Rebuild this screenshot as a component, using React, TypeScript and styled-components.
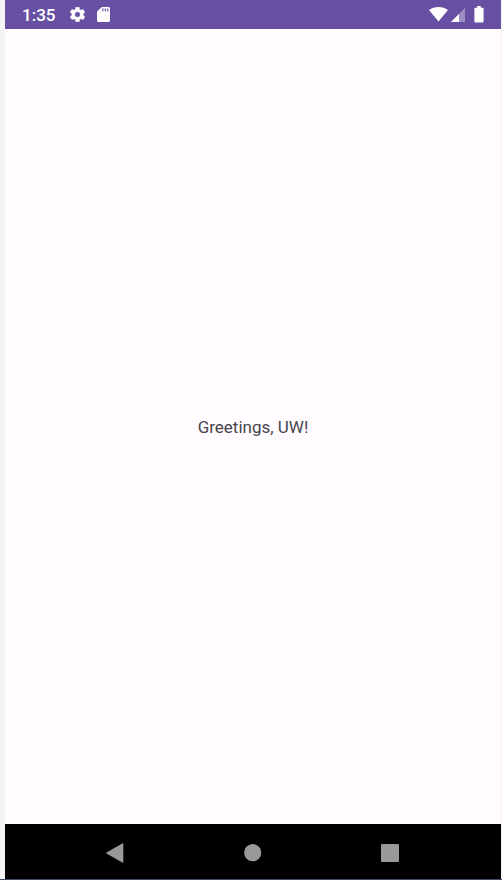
import React from "react";
import styled, { createGlobalStyle } from "styled-components";

const GlobalStyle = createGlobalStyle`
  body { margin: 0; background: #f4f4f4; }
`;

const Window = styled.div`
  box-sizing: border-box;
  width: 502px;
  height: 880px;
  padding: 0 1px 0 5px;
  background: #f4f4f4;
  border-bottom: 1px solid #404a70;
  font-family: Roboto, sans-serif;
`;

const Screen = styled.div`
  display: flex;
  flex-direction: column;
  height: 100%;
  background: #fffbfe;
`;

const StatusBar = styled.header`
  display: flex;
  justify-content: space-between;
  height: 29px;
  background: #6750a4;
  color: #fff;
`;

const StatusGroup = styled.div<{ $start?: number; $end?: number }>`
  display: flex;
  align-items: flex-start;
  padding-left: ${(p) => p.$start ?? 0}px;
  padding-right: ${(p) => p.$end ?? 0}px;
`;

const Clock = styled.span`
  width: 48px;
  padding-top: 5px;
  font-size: 17px;
  line-height: 20px;
  font-weight: 500;
`;

const Glyph = styled.svg<{ $top?: number; $gap?: number }>`
  display: block;
  flex: none;
  margin-top: ${(p) => p.$top ?? 0}px;
  margin-right: ${(p) => p.$gap ?? 0}px;
`;

const Content = styled.main`
  display: flex;
  flex: 1;
  align-items: center;
  justify-content: center;
`;

const Greeting = styled.p`
  margin: 0;
  font-size: 17px;
  line-height: 20px;
  color: #49454f;
`;

const NavBar = styled.nav`
  display: flex;
  align-items: flex-start;
  height: 55px;
  box-sizing: border-box;
  padding-left: 101px;
  background: #000;
`;

export default function App() {
  return (
    <>
      <GlobalStyle />
      <Window>
        <Screen>
          <StatusBar>
            <StatusGroup $start={17}>
              <Clock>1:35</Clock>
              <Glyph $top={7} $gap={12} width="15" height="15" viewBox="2.4 2.2 19.2 19.6" preserveAspectRatio="none" fill="#fff" stroke="#fff" strokeWidth=".5">
                <path d="M19.14 12.94c.04-.3.06-.61.06-.94 0-.32-.02-.64-.07-.94l2.03-1.58c.18-.14.23-.41.12-.61l-1.92-3.32c-.12-.22-.37-.29-.59-.22l-2.39.96c-.5-.38-1.03-.7-1.62-.94l-.36-2.54c-.04-.24-.24-.41-.48-.41h-3.84c-.24 0-.43.17-.47.41l-.36 2.54c-.59.24-1.13.57-1.62.94l-2.39-.96c-.22-.08-.47 0-.59.22L2.74 8.87c-.12.21-.08.47.12.61l2.03 1.58c-.05.3-.09.63-.09.94s.02.64.07.94l-2.03 1.58c-.18.14-.23.41-.12.61l1.92 3.32c.12.22.37.29.59.22l2.39-.96c.5.38 1.03.7 1.62.94l.36 2.54c.05.24.24.41.48.41h3.84c.24 0 .44-.17.47-.41l.36-2.54c.59-.24 1.13-.56 1.62-.94l2.39.96c.22.08.47 0 .59-.22l1.92-3.32c.12-.22.07-.47-.12-.61l-2.01-1.58zM12 15.6c-1.98 0-3.6-1.62-3.6-3.6s1.62-3.6 3.6-3.6 3.6 1.62 3.6 3.6-1.62 3.6-3.6 3.6z" />
              </Glyph>
              <Glyph $top={7} width="13" height="15" viewBox="4 2 16 20" preserveAspectRatio="none" fill="#fff">
                <path d="M18 2h-8L4.02 8 4 20c0 1.1.9 2 2 2h12c1.1 0 2-.9 2-2V4c0-1.1-.9-2-2-2zm-6 5.5h-1.5V4H12v3.5zm3 0h-1.5V4H15v3.5zm3 0h-1.5V4H18v3.5z" />
              </Glyph>
            </StatusGroup>
            <StatusGroup $end={17}>
              <Glyph $top={7} $gap={3} width="19" height="15" viewBox="0 0 19 15" fill="#fff">
                <path d="M9.5 14.6 0 3.1C2.6 1.1 5.9 0 9.5 0S16.4 1.1 19 3.1Z" />
              </Glyph>
              <Glyph $top={8} $gap={9} width="14" height="14" viewBox="0 0 14 14" fill="#fff">
                <path d="M0 14 14 0V14Z" fillOpacity=".35" />
                <path d="M0 14 8 6V14Z" />
              </Glyph>
              <Glyph $top={6} width="10" height="17" viewBox="0 0 10 17" fill="#fff">
                <path d="M3.2 0h3.6v1.7h1.7c.7 0 1.1.4 1.1 1v12.6c0 .7-.4 1.1-1.1 1.1h-7c-.7 0-1.1-.4-1.1-1.1V2.7c0-.6.4-1 1.1-1h1.7Z" />
              </Glyph>
            </StatusGroup>
          </StatusBar>
          <Content>
            <Greeting>Greetings, UW!</Greeting>
          </Content>
          <NavBar>
            <Glyph $top={19} $gap={120} width="18" height="20" viewBox="0 0 18 20" fill="#999">
              <path d="M.5 9.4Q-.2 10 .5 10.6L16.7 19.8Q17.3 20 17.3 19.2V.8Q17.3 0 16.7.2Z" />
            </Glyph>
            <Glyph $top={20} $gap={119} width="18" height="18" viewBox="0 0 18 18" fill="#999">
              <circle cx="8.7" cy="8.7" r="8.6" />
            </Glyph>
            <Glyph $top={20} width="18" height="18" viewBox="0 0 18 18" fill="#999">
              <rect width="18" height="18" rx="1.2" />
            </Glyph>
          </NavBar>
        </Screen>
      </Window>
    </>
  );
}
